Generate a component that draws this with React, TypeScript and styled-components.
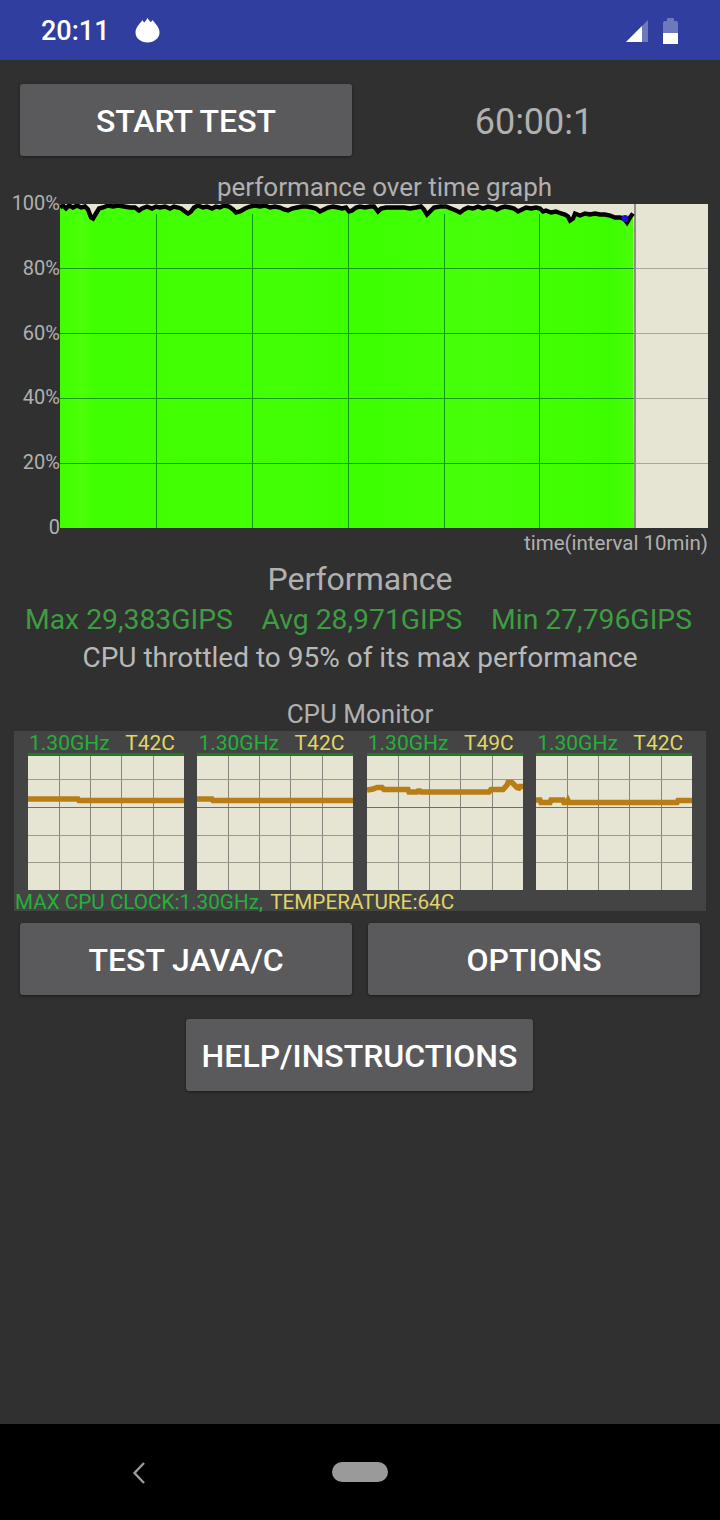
import React from 'react';
import styled, { createGlobalStyle } from 'styled-components';

const GlobalStyle = createGlobalStyle`
  html, body {
    margin: 0;
    padding: 0;
    background: #303030;
  }
  * {
    box-sizing: border-box;
  }
`;

const perfLine: number[][] = [
  [60, 208], [63, 206], [66, 209], [69, 206], [73, 208], [77, 206], [81, 208], [85, 207], [88, 210], [91, 218], [93, 219],
  [96, 214], [99, 209], [103, 208], [108, 206], [113, 207], [118, 206], [124, 207], [130, 208], [135, 208], [139, 211],
  [142, 209], [147, 207], [152, 209], [156, 207], [160, 208], [165, 207], [170, 209], [174, 207], [178, 208], [181, 209],
  [185, 212], [188, 214], [191, 212], [194, 208], [198, 206], [203, 208], [207, 207], [212, 209], [216, 207], [220, 208],
  [224, 206], [229, 207], [233, 210], [236, 213], [240, 212], [245, 209], [250, 207], [255, 206], [260, 207], [265, 206],
  [270, 208], [275, 207], [280, 208], [284, 210], [288, 211], [292, 209], [297, 208], [302, 207], [307, 207], [312, 208],
  [316, 209], [320, 212], [324, 210], [328, 208], [333, 207], [338, 208], [342, 209], [346, 208], [349, 212], [352, 211],
  [356, 208], [360, 207], [365, 208], [370, 207], [374, 207], [378, 212], [381, 209], [386, 208], [392, 208], [398, 208],
  [404, 208], [410, 209], [416, 208], [421, 207], [424, 210], [427, 215], [430, 212], [434, 208], [440, 207], [446, 207],
  [451, 209], [456, 211], [460, 213], [464, 210], [468, 208], [473, 209], [478, 207], [483, 209], [488, 207], [493, 208],
  [497, 210], [501, 208], [505, 207], [510, 208], [514, 209], [518, 212], [522, 210], [526, 208], [531, 209], [536, 208],
  [540, 209], [543, 212], [546, 211], [551, 213], [556, 212], [561, 214], [565, 215], [568, 217], [570, 221], [573, 219],
  [575, 214], [580, 216], [585, 214], [590, 215], [595, 214], [600, 215], [605, 215], [610, 216], [615, 218], [620, 218],
  [624, 219], [627, 223], [630, 218], [633, 214],
];

const perfGreen =
  'M60 528 L' + perfLine.map((p) => p[0] + ' ' + p[1]).join(' L') + ' L634 528 Z';
const perfBlack = 'M' + perfLine.map((p) => p[0] + ' ' + (p[1] - 0.5)).join(' L');

const cores = [
  {
    ghz: '1.30GHz',
    temp: 'T42C',
    line: [[0, 43], [50, 43], [51, 44.5], [156, 44.5]],
  },
  {
    ghz: '1.30GHz',
    temp: 'T42C',
    line: [[0, 43], [15, 43], [16, 44.5], [156, 44.5]],
  },
  {
    ghz: '1.30GHz',
    temp: 'T49C',
    line: [[0, 34], [6, 33], [10, 31.5], [15, 31.5], [17, 33.5], [41, 33.5], [42, 36], [50, 36], [51, 35], [53, 35], [54, 36], [122, 36], [124, 33.5], [136, 33.5], [140, 29], [141, 26.5], [145, 26.5], [150, 31.5], [152, 32], [153, 30.5], [156, 30.5]],
  },
  {
    ghz: '1.30GHz',
    temp: 'T42C',
    line: [[0, 44], [4, 44], [5, 46.5], [14, 46.5], [15, 44], [27, 44], [28, 46.5], [31, 46.5], [32, 44.5], [33, 46.5], [141, 46.5], [142, 44.5], [156, 44.5]],
  },
];

const StyledPage = styled.div`
  width: 720px;
  height: 1520px;
  display: flex;
  flex-direction: column;
  background: #303030;
  font-family: Roboto, 'Liberation Sans', sans-serif;
  overflow: hidden;
`;

const StatusBar = styled.div`
  height: 60px;
  flex: none;
  display: flex;
  align-items: center;
  padding: 2px 42px 0 41px;
  background: #303f9f;
  color: #ffffff;
`;

const StatusTime = styled.span`
  font-size: 27px;
  font-weight: 500;
  line-height: 58px;
  margin-right: 25px;
`;

const FlameSvg = styled.svg`
  display: block;
  margin-top: -2px;
`;

const StatusRight = styled.div`
  margin-left: auto;
  display: flex;
  align-items: center;
  gap: 15px;
`;

const Main = styled.div`
  flex: 1;
  padding-top: 24px;
`;

const TopRow = styled.div`
  display: grid;
  grid-template-columns: 332px 1fr;
  padding: 0 20px;
`;

const ActionButton = styled.button<{ $width?: number }>`
  height: 72px;
  width: ${(p) => (p.$width ? p.$width + 'px' : '100%')};
  padding: 2px 0 0;
  border: none;
  border-radius: 3px;
  background: #5a5a5c;
  box-shadow: 0 1px 3px rgba(0, 0, 0, 0.45);
  color: #ffffff;
  font-family: Roboto, 'Liberation Sans', sans-serif;
  font-size: 32px;
  font-weight: 500;
`;

const Timer = styled.div`
  display: flex;
  align-items: center;
  justify-content: center;
  padding: 4px 0 0 16px;
  color: #b0b0b0;
  font-size: 36px;
`;

const GraphTitle = styled.div`
  margin-top: 16px;
  padding-left: 49px;
  height: 32px;
  line-height: 30px;
  text-align: center;
  color: #b0b0b0;
  font-size: 26px;
`;

const GraphRow = styled.div`
  display: flex;
  height: 324px;
`;

const AxisLabels = styled.div`
  width: 60px;
  flex: none;
  margin-top: -13px;
  display: grid;
  grid-template-rows: repeat(5, 64.8px) 24px;
  text-align: right;
  color: #b0b0b0;
  font-size: 20px;
  line-height: 24px;
`;

const TimeLabel = styled.div`
  margin-top: 3px;
  padding-right: 12px;
  text-align: right;
  color: #b0b0b0;
  font-size: 20.5px;
  line-height: 24px;
`;

const SectionTitle = styled.div`
  margin-top: 6px;
  text-align: center;
  color: #b0b0b0;
  font-size: 32px;
  line-height: 36px;
`;

const StatsRow = styled.div`
  margin-top: 7px;
  padding: 0 28px 0 25px;
  display: flex;
  justify-content: space-between;
  color: #3f9c42;
  font-size: 28.3px;
  line-height: 32px;
`;

const ThrottleText = styled.div`
  margin-top: 6px;
  text-align: center;
  color: #b8b8b8;
  font-size: 28px;
  line-height: 32px;
`;

const MonitorTitle = styled.div`
  margin-top: 25px;
  text-align: center;
  color: #b0b0b0;
  font-size: 26px;
  line-height: 30px;
`;

const MonitorPanel = styled.div`
  margin: 2px 14px 0;
  height: 180px;
  background: #444444;
`;

const CoreGrid = styled.div`
  display: grid;
  grid-template-columns: repeat(4, 156px);
  column-gap: 13.4px;
  padding-left: 14px;
`;

const CoreLabels = styled.div`
  height: 22px;
  display: flex;
  justify-content: space-between;
  padding: 0 9px 0 1px;
  font-size: 21px;
  line-height: 24px;
`;

const GreenText = styled.span`
  color: #25b03c;
`;

const YellowText = styled.span`
  color: #e0d568;
`;

const FooterTemp = styled(YellowText)`
  margin-left: 2px;
`;

const CoreChart = styled.svg`
  display: block;
  width: 156px;
  height: 137px;
`;

const MonitorFooter = styled.div`
  padding-left: 1px;
  font-size: 20.7px;
  line-height: 24px;
  height: 21px;
  white-space: nowrap;
`;

const ButtonRow = styled.div`
  margin-top: 12px;
  padding: 0 20px;
  display: grid;
  grid-template-columns: 332px 332px;
  column-gap: 16px;
`;

const CenterRow = styled.div`
  margin-top: 24px;
  padding-right: 1px;
  display: flex;
  justify-content: center;
`;

const NavBar = styled.div`
  height: 96px;
  flex: none;
  position: relative;
  display: flex;
  align-items: flex-start;
  justify-content: center;
  padding-top: 38px;
  background: #000000;
`;

const HomePill = styled.div`
  width: 56px;
  height: 20px;
  border-radius: 10px;
  background: #9a9a9a;
`;

const BackIcon = styled.svg`
  position: absolute;
  left: 131px;
  top: 37px;
`;

const FlameIcon = () => (
  <FlameSvg width="25" height="26" viewBox="0 0 26 28" preserveAspectRatio="none">
    <path
      d="M13 1 C14.5 3.5 15.5 4.5 16.5 5.5 C17.3 4.8 17.8 4.2 18.2 3.2 C19.5 4.8 20.5 6 21.5 7.5 C24 10.5 25.5 13.5 25.5 16.5 C25.5 23 20 27.5 13 27.5 C6 27.5 0.5 23 0.5 16.5 C0.5 13.5 2 10.5 4.5 7.5 C5.5 6.2 6.5 5 7.8 3.2 C8.2 4.4 8.8 5.2 9.6 5.8 C10.8 4.6 12 3 13 1 Z"
      fill="#ffffff"
    />
  </FlameSvg>
);

const SignalIcon = () => (
  <svg width="22" height="22" viewBox="0 0 22 22">
    <path d="M22 0 V22 H0 Z" fill="#ffffff" fillOpacity="0.3" />
    <path d="M16 6 V22 H0 Z" fill="#ffffff" />
  </svg>
);

const BatteryIcon = () => (
  <svg width="15" height="26" viewBox="0 0 15 26">
    <path d="M0 5 Q0 3 2 3 H4 V1 Q4 0 5 0 H10 Q11 0 11 1 V3 H13 Q15 3 15 5 V15 H0 Z" fill="#ffffff" fillOpacity="0.3" />
    <rect x="0" y="15" width="15" height="11" fill="#ffffff" />
  </svg>
);

const PerformanceGraph = () => {
  const bandStops = [
    [0, '#40ff00'], [4, '#4cff08'], [6, '#40ff00'], [40, '#44ff06'], [50, '#3cff00'], [73, '#46ff0a'],
    [90, '#40ff00'], [96, '#3cfd00'], [100, '#4aff0a'],
  ];
  return (
    <svg width="648" height="324" viewBox="60 204 648 324" style={{ display: 'block' }}>
      <defs>
        <linearGradient id="bands" x1="60" x2="634" y1="0" y2="0" gradientUnits="userSpaceOnUse">
          {bandStops.map((s) => (
            <stop key={s[0]} offset={s[0] + '%'} stopColor={s[1] as string} />
          ))}
        </linearGradient>
      </defs>
      <rect x="60" y="204" width="648" height="324" fill="#e6e5d3" />
      <path d={perfGreen} fill="url(#bands)" />
      {[268, 333, 398, 463].map((y) => (
        <g key={y}>
          <line x1="60" x2="634" y1={y + 0.5} y2={y + 0.5} stroke="#12a00c" strokeWidth="1" />
          <line x1="634" x2="708" y1={y + 0.5} y2={y + 0.5} stroke="#a8a89a" strokeWidth="1" />
        </g>
      ))}
      {[156, 252, 348, 444, 539].map((x) => (
        <line key={x} x1={x + 0.5} x2={x + 0.5} y1="214" y2="528" stroke="#0e9a0c" strokeWidth="1" />
      ))}
      <rect x="634" y="204" width="2" height="324" fill="#8f8f84" />
      <path d={perfBlack} fill="none" stroke="#000000" strokeWidth="4.4" strokeLinejoin="miter" />
      <circle cx="625" cy="218.5" r="3.4" fill="#1a10d8" />
    </svg>
  );
};

const CoreGraph = ({ line }: { line: number[][] }) => (
  <CoreChart viewBox="0 -3 156 137">
    <rect x="0" y="-3" width="156" height="3" fill="#1f7a1f" />
    <rect x="0" y="0" width="156" height="134" fill="#e6e5d3" />
    {[31.5, 62.5, 93.5, 125.5].map((x) => (
      <line key={x} x1={x} x2={x} y1="0" y2="134" stroke="#85857c" strokeWidth="1" />
    ))}
    {[23.5, 79.5, 106.5].map((y) => (
      <line key={y} x1="0" x2="156" y1={y} y2={y} stroke="#9a9a8f" strokeWidth="1" />
    ))}
    <line x1="0" x2="156" y1="51.5" y2="51.5" stroke="#6f6f68" strokeWidth="1" />
    <polyline
      points={line.map((p) => p.join(',')).join(' ')}
      fill="none"
      stroke="#b87d14"
      strokeWidth="5.5"
    />
  </CoreChart>
);

const App = () => {
  return (
    <StyledPage>
      <GlobalStyle />
      <StatusBar>
        <StatusTime>20:11</StatusTime>
        <FlameIcon />
        <StatusRight>
          <SignalIcon />
          <BatteryIcon />
        </StatusRight>
      </StatusBar>
      <Main>
        <TopRow>
          <ActionButton>START TEST</ActionButton>
          <Timer>60:00:1</Timer>
        </TopRow>
        <GraphTitle>performance over time graph</GraphTitle>
        <GraphRow>
          <AxisLabels>
            {['100%', '80%', '60%', '40%', '20%', '0'].map((label) => (
              <div key={label}>{label}</div>
            ))}
          </AxisLabels>
          <PerformanceGraph />
        </GraphRow>
        <TimeLabel>time(interval 10min)</TimeLabel>
        <SectionTitle>Performance</SectionTitle>
        <StatsRow>
          <span>Max 29,383GIPS</span>
          <span>Avg 28,971GIPS</span>
          <span>Min 27,796GIPS</span>
        </StatsRow>
        <ThrottleText>CPU throttled to 95% of its max performance</ThrottleText>
        <MonitorTitle>CPU Monitor</MonitorTitle>
        <MonitorPanel>
          <CoreGrid>
            {cores.map((core, i) => (
              <div key={i}>
                <CoreLabels>
                  <GreenText>{core.ghz}</GreenText>
                  <YellowText>{core.temp}</YellowText>
                </CoreLabels>
                <CoreGraph line={core.line} />
              </div>
            ))}
          </CoreGrid>
          <MonitorFooter>
            <GreenText>MAX CPU CLOCK:1.30GHz, </GreenText>
            <FooterTemp>TEMPERATURE:64C</FooterTemp>
          </MonitorFooter>
        </MonitorPanel>
        <ButtonRow>
          <ActionButton>TEST JAVA/C</ActionButton>
          <ActionButton>OPTIONS</ActionButton>
        </ButtonRow>
        <CenterRow>
          <ActionButton $width={347}>HELP/INSTRUCTIONS</ActionButton>
        </CenterRow>
      </Main>
      <NavBar>
        <BackIcon width="16" height="24" viewBox="0 0 16 24">
          <path d="M13 2 L3.5 12 L13 22" fill="none" stroke="#9a9a9a" strokeWidth="2.4" />
        </BackIcon>
        <HomePill />
      </NavBar>
    </StyledPage>
  );
};

export default App;
